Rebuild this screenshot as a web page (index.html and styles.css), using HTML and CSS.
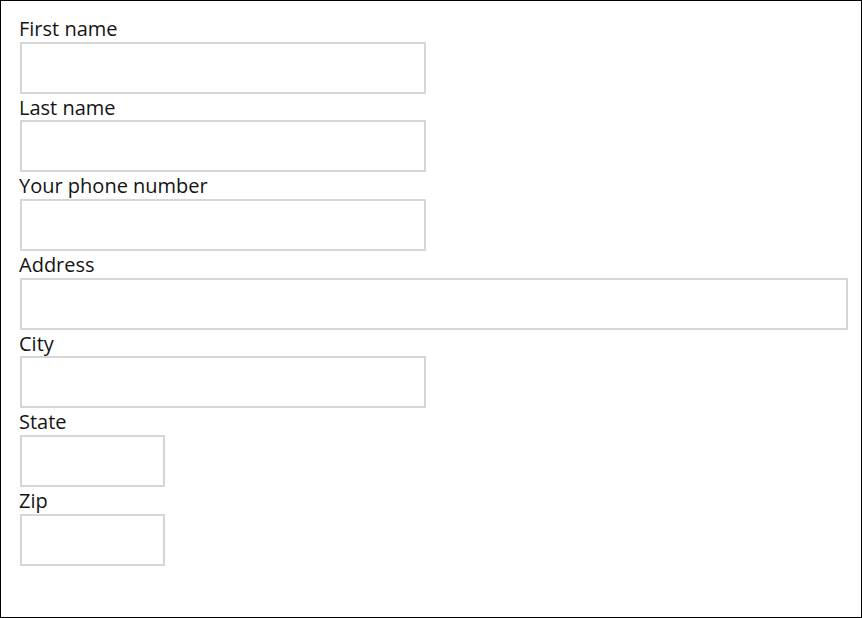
FILE: index.html
```html
<!DOCTYPE html>
<html>
<head>
<meta charset="utf-8">
<link rel="stylesheet" href="styles.css">
</head>
<body>
<form class="frame">
  <label class="label" for="fn">First name</label>
  <input class="field field-md" id="fn" type="text">
  <label class="label" for="ln">Last name</label>
  <input class="field field-md" id="ln" type="text">
  <label class="label" for="ph">Your phone number</label>
  <input class="field field-md" id="ph" type="text">
  <label class="label" for="ad">Address</label>
  <input class="field field-lg" id="ad" type="text">
  <label class="label" for="ci">City</label>
  <input class="field field-md" id="ci" type="text">
  <label class="label" for="st">State</label>
  <input class="field field-sm" id="st" type="text">
  <label class="label" for="zp">Zip</label>
  <input class="field field-sm" id="zp" type="text">
</form>
</body>
</html>
```
FILE: styles.css
```css
html, body {
  margin: 0;
  padding: 0;
  background: #fff;
}
.frame {
  box-sizing: border-box;
  width: 862px;
  height: 618px;
  border: 1px solid #000;
  padding: 14px 0 0 19px;
  display: flex;
  flex-direction: column;
  align-items: flex-start;
  font-family: "Open Sans", sans-serif;
}
.label {
  font-size: 20px;
  line-height: 25.67px;
  padding-top: 1px;
  color: #141414;
  display: block;
  margin-left: -1px;
}
.field {
  box-sizing: border-box;
  height: 52px;
  margin: 0;
  border: 2px solid #d6d6d6;
  background: #fff;
  padding: 0;
  font: inherit;
}
.field-md { width: 406px; }
.field-lg { width: 828px; }
.field-sm { width: 145px; }
```
